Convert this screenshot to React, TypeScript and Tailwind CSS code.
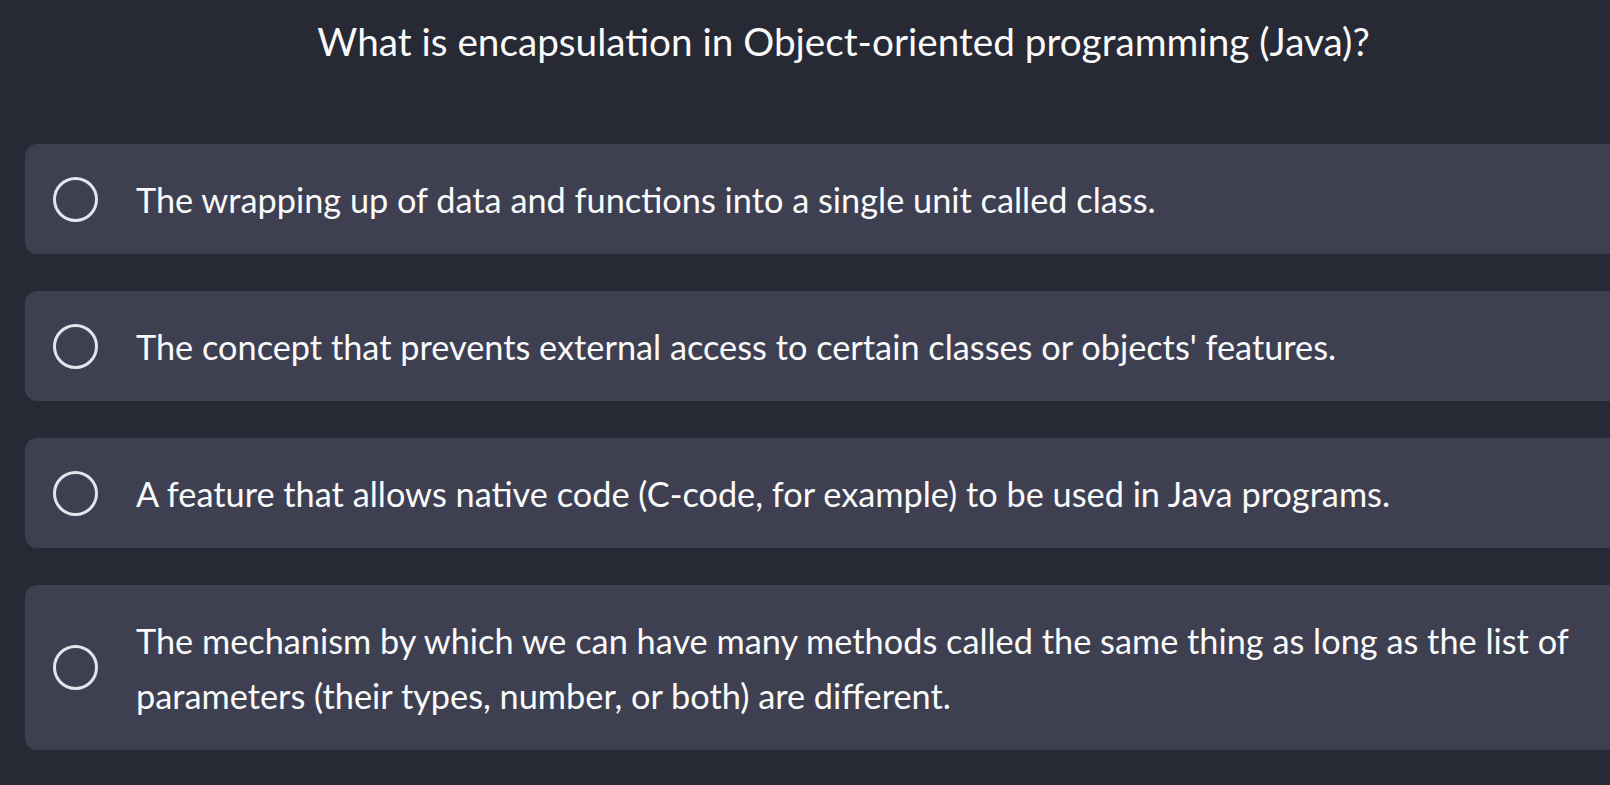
const options = [
  'The wrapping up of data and functions into a single unit called class.',
  "The concept that prevents external access to certain classes or objects' features.",
  'A feature that allows native code (C-code, for example) to be used in Java programs.',
  'The mechanism by which we can have many methods called the same thing as long as the list of parameters (their types, number, or both) are different.',
];

export default function App() {
  return (
    <div className="w-[1610px] h-[785px] overflow-hidden bg-[#272934] font-['Lato',sans-serif] text-[#fafafa]">
      <div className="w-[1637px] ml-[25px]">
        {/* Question */}
        <h1 className="text-center text-[38.7px] leading-[40px] pt-[21px] h-[144px]">
          What is encapsulation in Object-oriented programming (Java)?
        </h1>

        {/* Options */}
        <div className="flex flex-col gap-[37px]">
          {options.map((opt) => (
            <label
              key={opt}
              className="flex items-center rounded-xl bg-[#3e4052] py-[27.5px] pl-[28px] pr-[40px] cursor-pointer"
            >
              <span className="shrink-0 w-[45px] h-[45px] rounded-full border-[3px] border-[#e4e4ea]" />
              <span className="ml-[38px] text-[34.3px] leading-[55px] max-w-[1470px]">{opt}</span>
            </label>
          ))}
        </div>
      </div>
    </div>
  );
}
